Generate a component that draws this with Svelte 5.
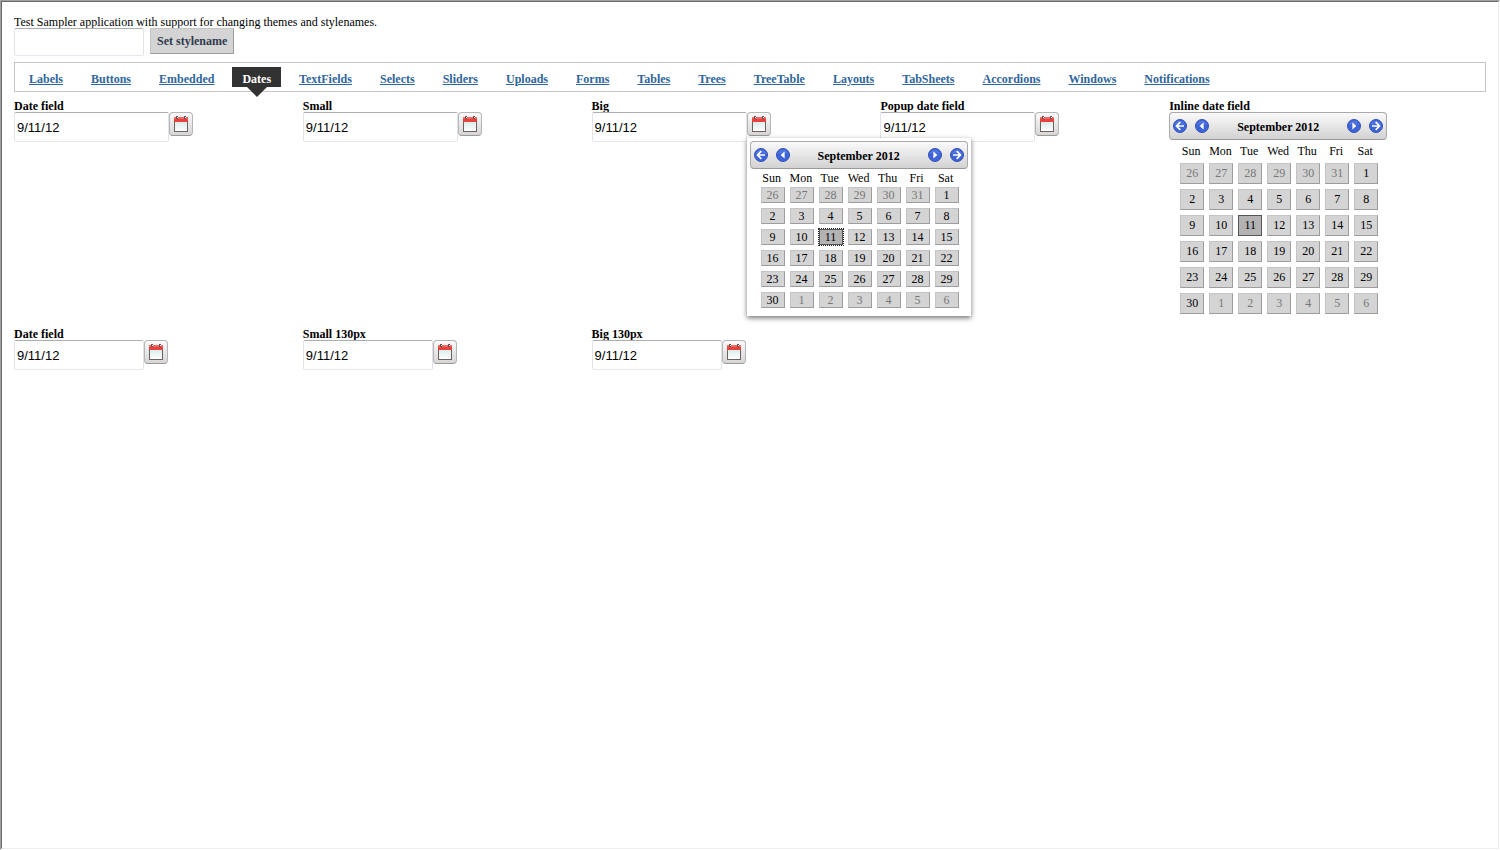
<script>
  const tabs = ['Labels', 'Buttons', 'Embedded', 'Dates', 'TextFields', 'Selects', 'Sliders', 'Uploads', 'Forms', 'Tables', 'Trees', 'TreeTable', 'Layouts', 'TabSheets', 'Accordions', 'Windows', 'Notifications'];
  const weekdays = ['Sun', 'Mon', 'Tue', 'Wed', 'Thu', 'Fri', 'Sat'];
  const first = new Date(2012, 7, 26);
  const weeks = Array.from({ length: 6 }, (_, w) =>
    Array.from({ length: 7 }, (_, d) => {
      const date = new Date(first.getFullYear(), first.getMonth(), first.getDate() + w * 7 + d);
      return { day: date.getDate(), off: date.getMonth() !== 8 };
    })
  );
  const rows = [
    [
      { id: 'd1', caption: 'Date field' },
      { id: 'd2', caption: 'Small' },
      { id: 'd3', caption: 'Big', open: true },
      { id: 'd4', caption: 'Popup date field' }
    ],
    [
      { id: 'n1', caption: 'Date field', narrow: true },
      { id: 'n2', caption: 'Small 130px', narrow: true },
      { id: 'n3', caption: 'Big 130px', narrow: true }
    ]
  ];
  let stylename = $state('');
</script>

{#snippet arrow(kind, label)}
  <button class="nav-btn" aria-label={label}>
    <svg width="14" height="14" viewBox="0 0 14 14" aria-hidden="true">
      <circle cx="7" cy="7" r="6.5" fill="#3c63d8" stroke="#3553b4" />
      <path d="M1.8 6A5.3 5.3 0 0 1 12.2 6Q7 4 1.8 6Z" fill="#6688e8" opacity=".5" />
      {#if kind === 'first'}
        <path d="M7.3 3.2L3.5 7l3.8 3.800M4.200 7H11" fill="none" stroke="#fff" stroke-width="1.7" />
      {:else if kind === 'prev'}
        <path d="M8.6 3.6V10.4L4.6 7Z" fill="#fff" />
      {:else if kind === 'next'}
        <path d="M5.4 3.6V10.4L9.4 7Z" fill="#fff" />
      {:else}
        <path d="M6.7 3.2L10.5 7l-3.800 3.800M9.800 7H3" fill="none" stroke="#fff" stroke-width="1.7" />
      {/if}
    </svg>
  </button>
{/snippet}

{#snippet calendar(compact)}
  <div class="calendar" class:compact>
    <div class="cal-head">
      {@render arrow('first', 'Previous year')}
      {@render arrow('prev', 'Previous month')}
      <strong>September 2012</strong>
      {@render arrow('next', 'Next month')}
      {@render arrow('last', 'Next year')}
    </div>
    <table>
      <thead>
        <tr>{#each weekdays as d}<th scope="col">{d}</th>{/each}</tr>
      </thead>
      <tbody>
        {#each weeks as week}
          <tr>
            {#each week as c}
              <td><button class="day" class:off={c.off} class:selected={c.day === 11}>{c.day}</button></td>
            {/each}
          </tr>
        {/each}
      </tbody>
    </table>
  </div>
{/snippet}

<div class="frame">
  <main>
    <label class="intro" for="stylename">Test Sampler application with support for changing themes and stylenames.</label>
    <div class="toolbar">
      <input id="stylename" type="text" bind:value={stylename} />
      <button class="set">Set stylename</button>
    </div>

    <nav>
      {#each tabs as tab}
        <a href="#{tab}" class:active={tab === 'Dates'}>{tab}</a>
      {/each}
    </nav>

    <div class="fields">
      {#each rows as row, r}
        {#each row as f}
          <div class="field">
            <label for={f.id}>{f.caption}</label>
            <div class="control">
              <input id={f.id} type="text" value="9/11/12" class:narrow={f.narrow} />
              <div class="anchor">
                <button class="pick" aria-label="Open calendar">
                  <svg width="16" height="18" viewBox="0 0 16 18" aria-hidden="true">
                    <defs>
                      <linearGradient id="{f.id}-paper" x1="0" y1="0" x2="0" y2="1">
                        <stop offset="0.3" stop-color="#dcebeb" />
                        <stop offset="1" stop-color="#fff" />
                      </linearGradient>
                    </defs>
                    <rect x="1.5" y="2.5" width="13" height="14" fill="url(#{f.id}-paper)" stroke="#70605c" />
                    <path d="M1 2h14v5H1z" fill="#e8423e" />
                    <path d="M1 2h14v2H1z" fill="#ee6a64" />
                    <path d="M3 1h2v3H3zM11 1h2v3h-2z" fill="#6b5150" />
                    <path d="M4 2h1v1H4zM12 2h1v1h-1z" fill="#fff" />
                  </svg>
                </button>
                {#if f.open}
                  <div class="popup">{@render calendar(true)}</div>
                {/if}
              </div>
            </div>
          </div>
        {/each}
        {#if r === 0}
          <div class="field">
            <span class="caption">Inline date field</span>
            {@render calendar(false)}
          </div>
        {/if}
      {/each}
    </div>
  </main>
</div>

<style>
  :global(body) {
    background: #fff;
    color: #000;
    font: 12px/12px "Liberation Serif", "Times New Roman", serif;
  }
  * {
    box-sizing: border-box;
  }
  button,
  input {
    margin: 0;
    padding: 0;
    font: inherit;
    color: inherit;
  }
  .frame {
    min-height: 100vh;
    border: 1px solid;
    border-color: #a0a0a0 #fff #fff #a0a0a0;
    display: flex;
  }
  main {
    flex: 1;
    border: 1px solid;
    border-color: #696969 #efefef #efefef #696969;
    padding: 14px 12px;
  }
  .intro {
    display: block;
  }
  .toolbar {
    display: flex;
    align-items: flex-start;
    gap: 6px;
    margin-bottom: 6px;
  }
  input {
    width: 155px;
    height: 30px;
    padding: 0 2px;
    border: 1px solid;
    border-color: #abadb3 #e2e3ea #e3e9ef #e2e3ea;
    border-radius: 2px;
    background: #fff;
    font: 13px "Liberation Sans", Arial, sans-serif;
    outline: none;
  }
  input.narrow {
    width: 130px;
  }
  .toolbar input {
    width: 130px;
    height: 28px;
  }
  .set {
    height: 26px;
    padding: 0 6px;
    border: 1px solid;
    border-color: #c4c4c4 #9d9d9d #9d9d9d #c4c4c4;
    background: #d4d4d4;
    color: #2f3b4c;
    font-weight: bold;
  }
  nav {
    display: flex;
    gap: 8px;
    height: 30px;
    padding: 4px;
    border: 1px solid #c5c5c5;
    margin-bottom: 8px;
  }
  nav a {
    position: relative;
    height: 20px;
    padding: 0 10px;
    line-height: 24px;
    font-weight: bold;
    color: #2f669b;
  }
  nav a.active {
    background: #323232;
    color: #fff;
    text-decoration: none;
  }
  nav a.active::after {
    content: "";
    position: absolute;
    top: 100%;
    left: 50%;
    margin-left: -10px;
    border: 10px solid transparent;
    border-top-color: #323232;
    border-bottom: 0;
  }
  .fields {
    display: grid;
    grid-template-columns: repeat(4, 289fr) 317fr;
    row-gap: 9px;
  }
  .field label,
  .caption {
    display: block;
    font-weight: bold;
  }
  .control {
    display: flex;
    align-items: flex-start;
  }
  .anchor {
    position: relative;
  }
  .pick {
    display: grid;
    place-items: center;
    width: 24px;
    height: 24px;
    border: 1px solid #b5b5b5;
    border-bottom-color: #999;
    border-radius: 4px;
    background: linear-gradient(#fafafa, #d6d6d6);
  }
  .popup {
    position: absolute;
    z-index: 1;
    top: 26px;
    left: 0;
    padding: 3px;
    background: #fff;
    box-shadow: 0 2px 5px rgba(0, 0, 0, 0.55);
  }
  .calendar {
    width: 218px;
  }
  .cal-head {
    display: flex;
    align-items: center;
    gap: 8px;
    height: 28px;
    padding: 0 3px;
    border: 1px solid #aaa;
    border-bottom-color: #999;
    border-radius: 4px;
    background: linear-gradient(#fafafa, #d2d2d2);
  }
  .cal-head strong {
    flex: 1;
    padding-top: 2px;
    text-align: center;
  }
  .nav-btn {
    width: 14px;
    height: 14px;
    border: 0;
    background: none;
  }
  .nav-btn svg {
    display: block;
  }
  table {
    margin-left: 6px;
    border-spacing: 5px;
    table-layout: fixed;
    width: 208px;
  }
  th,
  td {
    padding: 0;
  }
  th {
    height: 13px;
    padding-right: 2px;
    font-weight: normal;
    line-height: 13px;
    text-align: center;
  }
  .compact th {
    height: 8px;
    line-height: 8px;
  }
  .day {
    display: block;
    width: 24px;
    height: 21px;
    padding-bottom: 1px;
    border: 1px solid;
    border-color: #c4c4c4 #9d9d9d #9d9d9d #c4c4c4;
    background: #d4d4d4;
    text-align: center;
  }
  .compact .day {
    height: 16px;
    padding-bottom: 0;
  }
  .day.off {
    color: #777;
  }
  .day.selected {
    border-color: #555;
    background: #b3b3b3;
  }
  .compact .day.selected {
    outline: 1px dotted #222;
  }
</style>
